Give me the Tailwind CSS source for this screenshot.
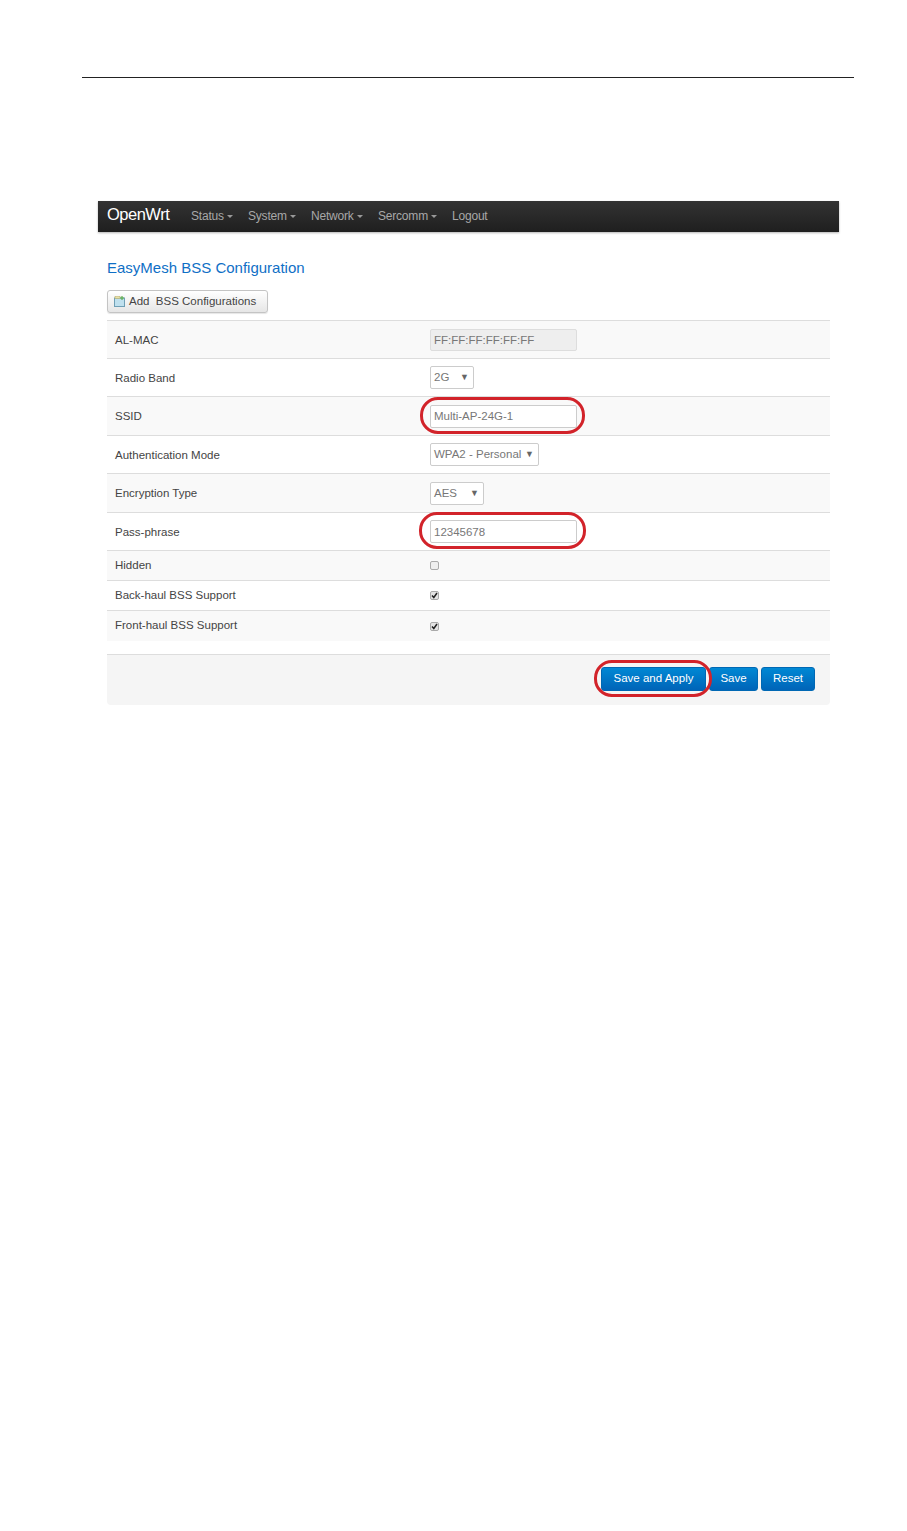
<!DOCTYPE html>
<html lang="en">
<head>
    <meta charset="UTF-8">
    <title>EasyMesh BSS Configuration</title>
    <script src="https://cdn.jsdelivr.net/npm/@tailwindcss/browser@4"></script>
</head>
<body class="bg-white font-['Liberation_Sans',Arial,sans-serif] text-[11.5px] text-[#444]">
    <!-- Page rule -->
    <div class="pt-[77px] pl-[82px] pr-[53px]">
        <div class="h-px bg-[#222]"></div>
    </div>

    <!-- Navbar -->
    <div class="mt-[123px] ml-[98px] mr-[68px] h-[31px] flex items-center pl-[9px] bg-gradient-to-b from-[#333] to-[#1f1f1f] shadow-[0_1px_2px_rgba(0,0,0,0.3)]">
        <span class="text-white text-[16.5px] w-[84px] -mt-[5px] tracking-[-0.5px]">OpenWrt</span>
        <div class="flex items-center -mt-[1px] text-[12px] text-[#a8a8a8] tracking-[-0.2px]">
            <span class="w-[57px]">Status <i class="inline-block align-middle border-x-[3px] border-x-transparent border-t-[3px] border-t-[#999]"></i></span>
            <span class="w-[63px]">System <i class="inline-block align-middle border-x-[3px] border-x-transparent border-t-[3px] border-t-[#999]"></i></span>
            <span class="w-[67px]">Network <i class="inline-block align-middle border-x-[3px] border-x-transparent border-t-[3px] border-t-[#999]"></i></span>
            <span class="w-[74px]">Sercomm <i class="inline-block align-middle border-x-[3px] border-x-transparent border-t-[3px] border-t-[#999]"></i></span>
            <span>Logout</span>
        </div>
    </div>

    <!-- Main content -->
    <div class="ml-[107px] mr-[77px]">
        <h2 class="mt-[26px] text-[15px] leading-[20px] text-[#0f6fc6]">EasyMesh BSS Configuration</h2>

        <button class="mt-[12px] w-[161px] h-[23px] flex items-center pl-[6px] border border-[#c4c4c4] rounded-[3px] bg-gradient-to-b from-white to-[#e6e6e6] shadow-[0_1px_1px_rgba(0,0,0,0.1)] text-[11.5px] text-[#444]">
            <svg width="11" height="11" viewBox="0 0 11 11" class="mr-[4px]">
                <rect x="0.5" y="2" width="10" height="8.5" fill="#bfe0ee" stroke="#6f9fb5"/>
                <rect x="1" y="0.5" width="5" height="2" fill="#e9e2a6" stroke="#b3a860" stroke-width="0.5"/>
                <path d="M8 0v4M6 2h4" stroke="#5fae4e" stroke-width="1.2"/>
            </svg>
            <span>Add&nbsp; BSS Configurations</span>
        </button>

        <div class="mt-[7px]">
            <div class="h-[39px] flex items-center bg-[#f9f9f9] border-y border-[#ddd] px-2">
                <span class="w-[315px] pt-[2px]">AL-MAC</span>
                <input disabled value="FF:FF:FF:FF:FF:FF" class="w-[147px] h-[22px] px-[3px] bg-[#eee] border border-[#ddd] rounded-[2px] text-[11.5px] text-[#777]">
            </div>
            <div class="h-[38px] flex items-center border-b border-[#ddd] px-2">
                <span class="w-[315px] pt-[2px]">Radio Band</span>
                <div class="w-[44px] h-[23px] flex items-center justify-between px-[3px] pt-[1px] bg-white border border-[#ccc] rounded-[2px] text-[#777]">
                    <span>2G</span><span class="text-[9px] text-[#666] mr-[1px]">▼</span>
                </div>
            </div>
            <div class="h-[39px] flex items-center bg-[#f9f9f9] border-b border-[#ddd] px-2">
                <span class="w-[315px] pt-[2px]">SSID</span>
                <div class="relative">
                    <input value="Multi-AP-24G-1" class="block w-[147px] h-[23px] px-[3px] bg-white border border-[#ccc] rounded-[2px] text-[11.5px] text-[#777]">
                    <div class="absolute -left-[10px] -top-[8px] w-[165px] h-[37px] border-[3px] border-[#d2232a] rounded-[18px]"></div>
                </div>
            </div>
            <div class="h-[38px] flex items-center border-b border-[#ddd] px-2">
                <span class="w-[315px] pt-[2px]">Authentication Mode</span>
                <div class="w-[109px] h-[23px] flex items-center justify-between px-[3px] pt-[1px] bg-white border border-[#ccc] rounded-[2px] text-[#777] whitespace-nowrap">
                    <span>WPA2 - Personal</span><span class="text-[9px] text-[#666] mr-[1px]">▼</span>
                </div>
            </div>
            <div class="h-[39px] flex items-center bg-[#f9f9f9] border-b border-[#ddd] px-2">
                <span class="w-[315px] pt-[2px]">Encryption Type</span>
                <div class="w-[54px] h-[23px] flex items-center justify-between px-[3px] pt-[1px] bg-white border border-[#ccc] rounded-[2px] text-[#777]">
                    <span>AES</span><span class="text-[9px] text-[#666] mr-[1px]">▼</span>
                </div>
            </div>
            <div class="h-[38px] flex items-center border-b border-[#ddd] px-2">
                <span class="w-[315px] pt-[2px]">Pass-phrase</span>
                <div class="relative">
                    <input value="12345678" class="block w-[147px] h-[23px] px-[3px] bg-white border border-[#ccc] rounded-[2px] text-[11.5px] text-[#777]">
                    <div class="absolute -left-[11px] -top-[8px] w-[167px] h-[37px] border-[3px] border-[#d2232a] rounded-[18px]"></div>
                </div>
            </div>
            <div class="h-[30px] flex items-center bg-[#f9f9f9] border-b border-[#ddd] px-2">
                <span class="w-[315px]">Hidden</span>
                <span class="w-[9px] h-[9px] bg-[#eee] border border-[#aaa] rounded-[2px]"></span>
            </div>
            <div class="h-[30px] flex items-center border-b border-[#ddd] px-2">
                <span class="w-[315px]">Back-haul BSS Support</span>
                <span class="w-[9px] h-[9px] flex items-center justify-center bg-[#e4e4e4] border border-[#aaa] rounded-[2px]">
                    <svg width="7" height="7" viewBox="0 0 7 7"><path d="M1 3.5l1.8 2L6 1" fill="none" stroke="#222" stroke-width="1.5"/></svg>
                </span>
            </div>
            <div class="h-[30px] flex items-center bg-[#f9f9f9] px-2">
                <span class="w-[315px]">Front-haul BSS Support</span>
                <span class="w-[9px] h-[9px] flex items-center justify-center bg-[#e4e4e4] border border-[#aaa] rounded-[2px]">
                    <svg width="7" height="7" viewBox="0 0 7 7"><path d="M1 3.5l1.8 2L6 1" fill="none" stroke="#222" stroke-width="1.5"/></svg>
                </span>
            </div>
        </div>

        <!-- Actions -->
        <div class="mt-[13px] h-[51px] flex items-center justify-end gap-[3px] pr-[15px] pb-[2px] bg-[#f5f5f5] border-t border-[#ddd] rounded-b-[4px]">
            <div class="relative">
                <button class="block w-[105px] h-[24px] bg-gradient-to-b from-[#0088d4] to-[#0064b8] border border-[#0068b4] rounded-[3px] text-[11.5px] text-white">Save and Apply</button>
                <div class="absolute -left-[7px] -top-[7px] w-[118px] h-[37px] border-[3px] border-[#d2232a] rounded-[18px]"></div>
            </div>
            <button class="w-[49px] h-[24px] bg-gradient-to-b from-[#0088d4] to-[#0064b8] border border-[#0068b4] rounded-[3px] text-[11.5px] text-white">Save</button>
            <button class="w-[54px] h-[24px] bg-gradient-to-b from-[#0088d4] to-[#0064b8] border border-[#0068b4] rounded-[3px] text-[11.5px] text-white">Reset</button>
        </div>
    </div>
</body>
</html>
